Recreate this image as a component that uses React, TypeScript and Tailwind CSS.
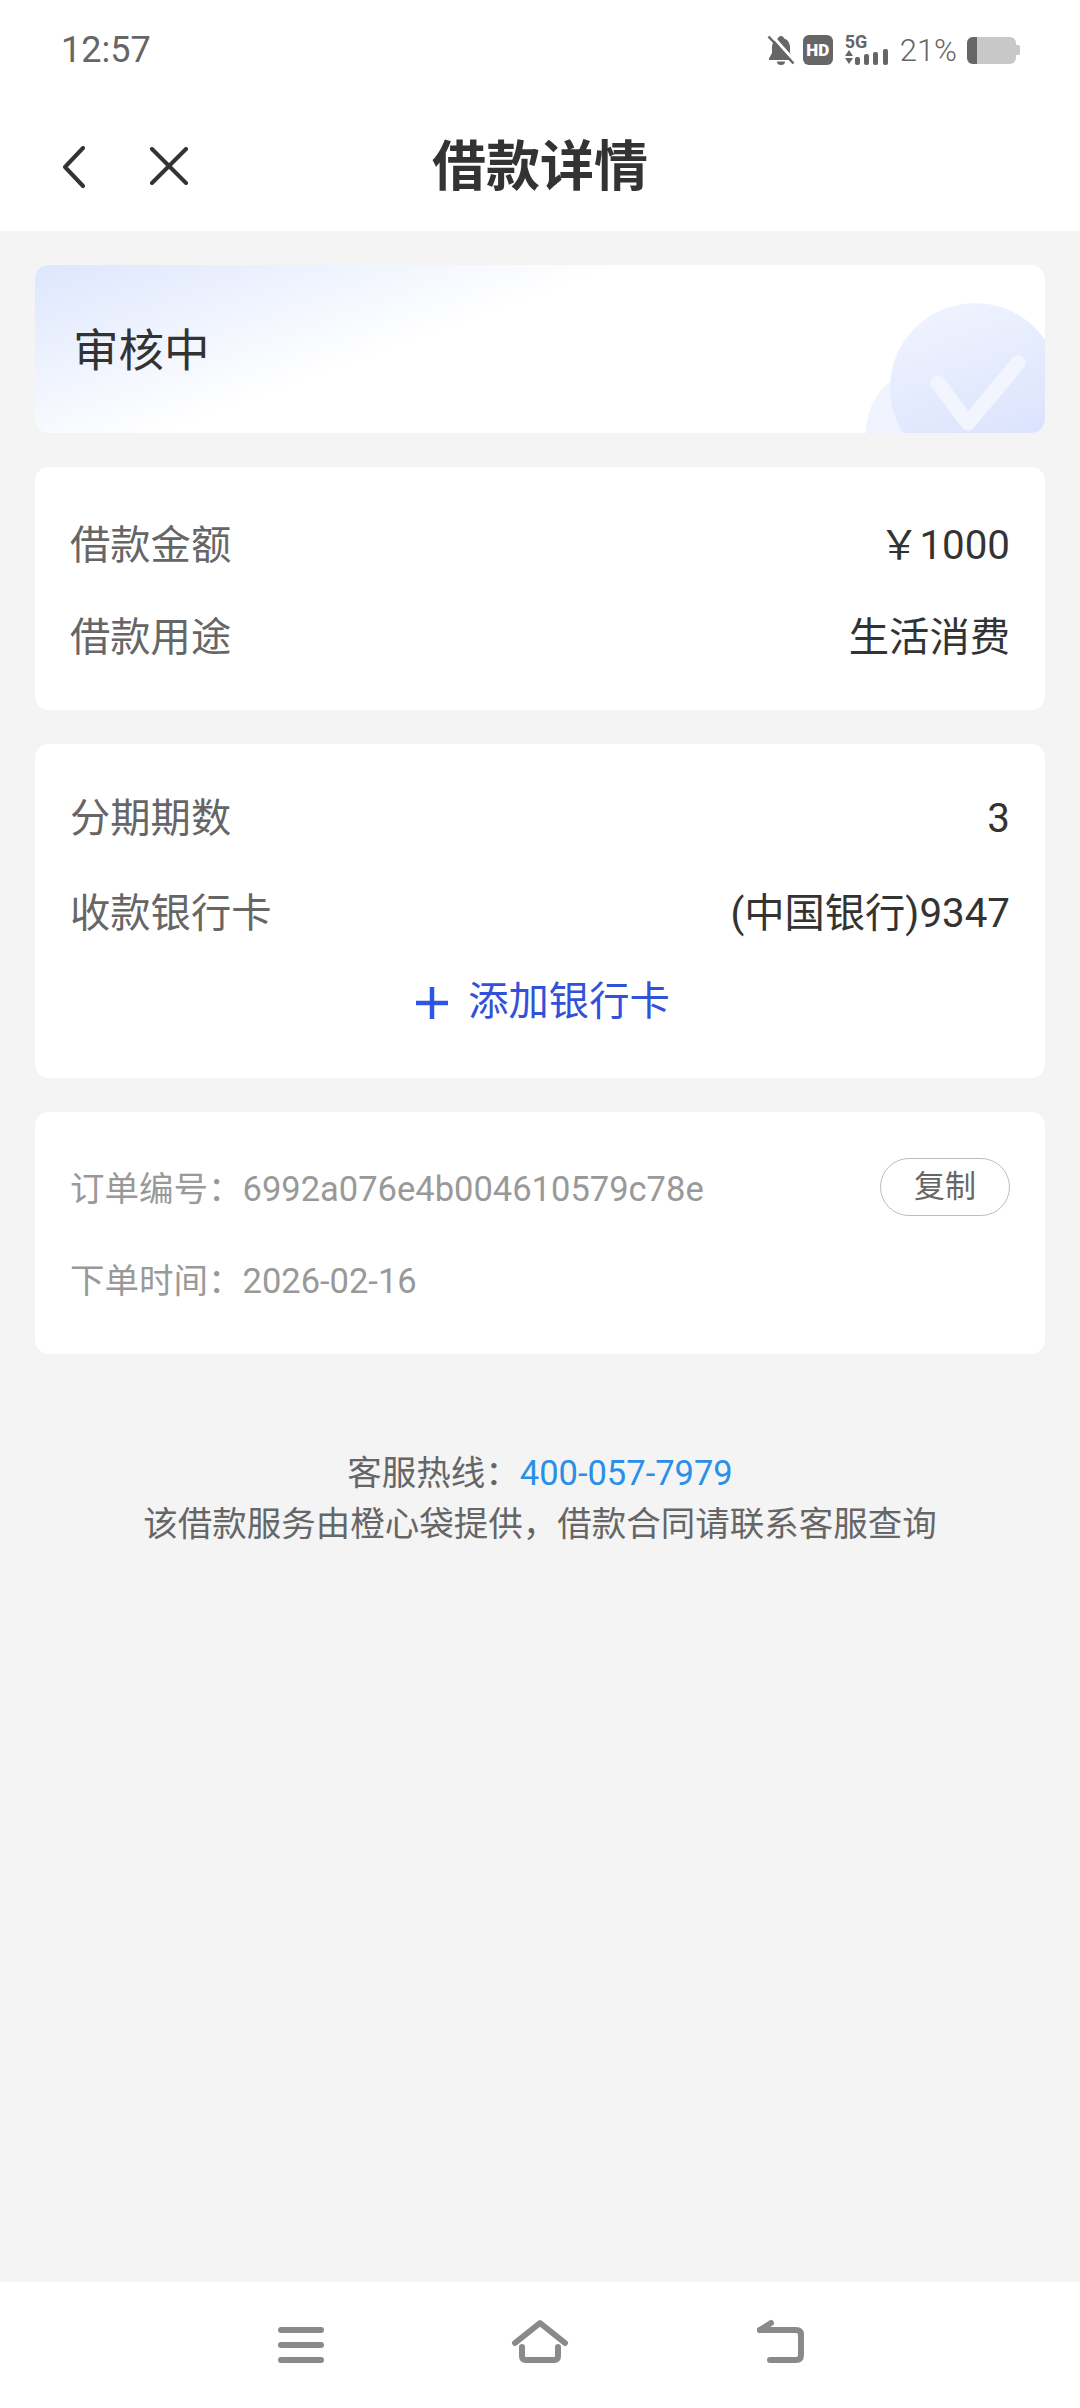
import React from 'react';

const font = "font-['Roboto','Noto_Sans_CJK_SC',sans-serif]";

const Row = ({ label, value, className = 'h-[92px]' }: { label: string; value: string; className?: string }) => (
  <div className={`flex items-center justify-between ${className}`}>
    <span className="text-[40.3px] text-[#666666]">{label}</span>
    <span className="text-[40.3px] text-[#333333]">{value}</span>
  </div>
);

const StatusBar = () => (
  <div className="flex h-[100px] items-center justify-between pl-[61px] pr-[60px] text-[#666666]">
    <span className="text-[36px] leading-none">12:57</span>
    <div className="flex items-center">
      {/* muted bell */}
      <svg width="28" height="30" viewBox="0 0 28 30" fill="none">
        <path d="M14 1c-1.600 0-2.800 1-3 2.400C7 4.600 5 8.500 5 12.500v5.500L2 23.500V25h24v-1.500L23 18v-5.500c0-4-2-7.900-6-9.100C16.800 2 15.600 1 14 1z" fill="#666666" />
        <path d="M10 26.500h8a4 3.500 0 0 1-8 0z" fill="#666666" />
        <path d="M4.500 0l24 27" stroke="#ffffff" strokeWidth="3" />
        <path d="M1.500 1.500l25 27" stroke="#666666" strokeWidth="2.500" />
      </svg>
      <div className="ml-[8px] flex h-[30px] w-[30px] items-center justify-center rounded-[6px] bg-[#666666] text-[17px] font-black leading-none text-white">
        HD
      </div>
      <div className="relative ml-[12px] h-[30px] w-[44px]">
        <span className="absolute left-0 top-[-2px] text-[18px] font-bold leading-[18px]">5G</span>
        <svg className="absolute left-0 top-0" width="44" height="30" viewBox="0 0 44 30" fill="#666666">
          <path d="M0 21l4-6 4 6z" />
          <path d="M0 23h8l-4 6z" />
          <rect x="10" y="22" width="5" height="8" rx="2" />
          <rect x="19" y="19" width="5" height="11" rx="2" />
          <rect x="28" y="17" width="5" height="13" rx="2" />
          <rect x="38" y="14" width="5" height="16" rx="2" />
        </svg>
      </div>
      <span className="ml-[11px] text-[31px] font-light leading-none">21%</span>
      <div className="ml-[10px] flex h-[27px] w-[49px] overflow-hidden rounded-[6px] bg-[#c8c8c8]">
        <div className="h-full w-[10px] bg-[#666666]" />
      </div>
      <div className="h-[10px] w-[4px] rounded-r-[2px] bg-[#c8c8c8]" />
    </div>
  </div>
);

const Header = () => (
  <div className="relative flex h-[131px] items-center justify-center bg-white pt-[5px]">
    <div className="absolute left-[62px] top-[46px]">
      <svg width="24" height="42" viewBox="0 0 24 42" fill="none" stroke="#333333" strokeWidth="4" strokeLinecap="round" strokeLinejoin="round">
        <path d="M21 2L3 21l18 19" />
      </svg>
    </div>
    <div className="absolute left-[149px] top-[47px]">
      <svg width="40" height="38" viewBox="0 0 40 38" fill="none" stroke="#333333" strokeWidth="4" strokeLinecap="round">
        <path d="M3 2l34 34M37 2L3 36" />
      </svg>
    </div>
    <h1 className="text-[54px] font-bold leading-none text-[#333333]">借款详情</h1>
  </div>
);

const StatusCard = () => (
  <div className="relative flex h-[168px] items-center overflow-hidden rounded-[14px] bg-[linear-gradient(160deg,#dde6fd_0%,#ffffff_40%)] pl-[38px] pt-[6px]">
    <span className="text-[45.5px] text-[#333333]">审核中</span>
    <div className="absolute left-[831px] top-[102px] h-[130px] w-[130px] rounded-full bg-[#f1f4fe]" />
    <div className="absolute left-[855px] top-[38px] h-[170px] w-[170px] rounded-full bg-[linear-gradient(160deg,#f2f5ff_0%,#dbe3fd_80%)]" />
    <svg className="absolute left-[893px] top-[88px]" width="100" height="80" viewBox="0 0 100 80" fill="none">
      <path d="M10 30l30 40L90 10" stroke="#f3f5fe" strokeWidth="15" strokeLinecap="round" strokeLinejoin="round" />
    </svg>
  </div>
);

const NavBar = () => (
  <div className="flex h-[126px] items-start justify-center gap-[180px] bg-white pt-[36px]">
    <svg width="60" height="50" viewBox="0 0 60 50" fill="none" stroke="#8a8a8a" strokeWidth="6" strokeLinecap="round">
      <path d="M11 12h40M11 27h40M11 42h40" />
    </svg>
    <svg width="60" height="50" viewBox="0 0 60 50" fill="none" stroke="#8a8a8a" strokeWidth="6" strokeLinecap="round" strokeLinejoin="round">
      <path d="M5 25L30 5l25 20" />
      <path d="M12 29v9q0 4 4 4h28q4 0 4-4v-9" />
    </svg>
    <svg width="60" height="50" viewBox="0 0 60 50" fill="none" stroke="#8a8a8a" strokeWidth="6" strokeLinecap="round" strokeLinejoin="round">
      <path d="M10 12h36q5 0 5 5v20q0 5-5 5H20" />
      <path d="M10 12l11-7" />
    </svg>
  </div>
);

export default function App() {
  return (
    <div className={`flex min-h-[2408px] flex-col bg-[#f4f4f4] ${font}`}>
      <div className="bg-white">
        <StatusBar />
        <Header />
      </div>

      <main className="flex flex-1 flex-col px-[35px] pt-[34px]">
        <div className="flex flex-col gap-[34px]">
          <StatusCard />

          <div className="rounded-[14px] bg-white px-[35px] pb-[26px] pt-[33px]">
            <Row label="借款金额" value="￥1000" />
            <Row label="借款用途" value="生活消费" />
          </div>

          <div className="rounded-[14px] bg-white px-[35px] pb-[34px] pt-[28px]">
            <Row label="分期期数" value="3" className="h-[95px]" />
            <Row label="收款银行卡" value="(中国银行)9347" className="h-[94px]" />
            <div className="flex h-[83px] items-center justify-center pl-[6px] text-[40.3px] text-[#3351d8]">
              <svg className="mr-[20px]" width="32" height="32" viewBox="0 0 32 32" fill="none" stroke="#2f55e6" strokeWidth="4.500">
                <path d="M0 16h32M16 0v32" />
              </svg>
              添加银行卡
            </div>
          </div>

          <div className="rounded-[14px] bg-white px-[35px] pb-[26px] pt-[32px] text-[34.5px] text-[#999999]">
            <div className="flex h-[92px] items-center justify-between">
              <span>订单编号：6992a076e4b004610579c78e</span>
              <button className="mb-[6px] flex h-[58px] w-[130px] items-center justify-center rounded-full border border-[#bdbdbd] text-[31px] text-[#666666]">
                复制
              </button>
            </div>
            <div className="flex h-[92px] items-center">下单时间：2026-02-16</div>
          </div>
        </div>

        <div className="mt-[94px] text-center text-[34.5px] leading-[51px] text-[#666666]">
          <p>
            客服热线：<span className="text-[#2b8fe8]">400-057-7979</span>
          </p>
          <p>该借款服务由橙心袋提供，借款合同请联系客服查询</p>
        </div>
      </main>

      <NavBar />
    </div>
  );
}
